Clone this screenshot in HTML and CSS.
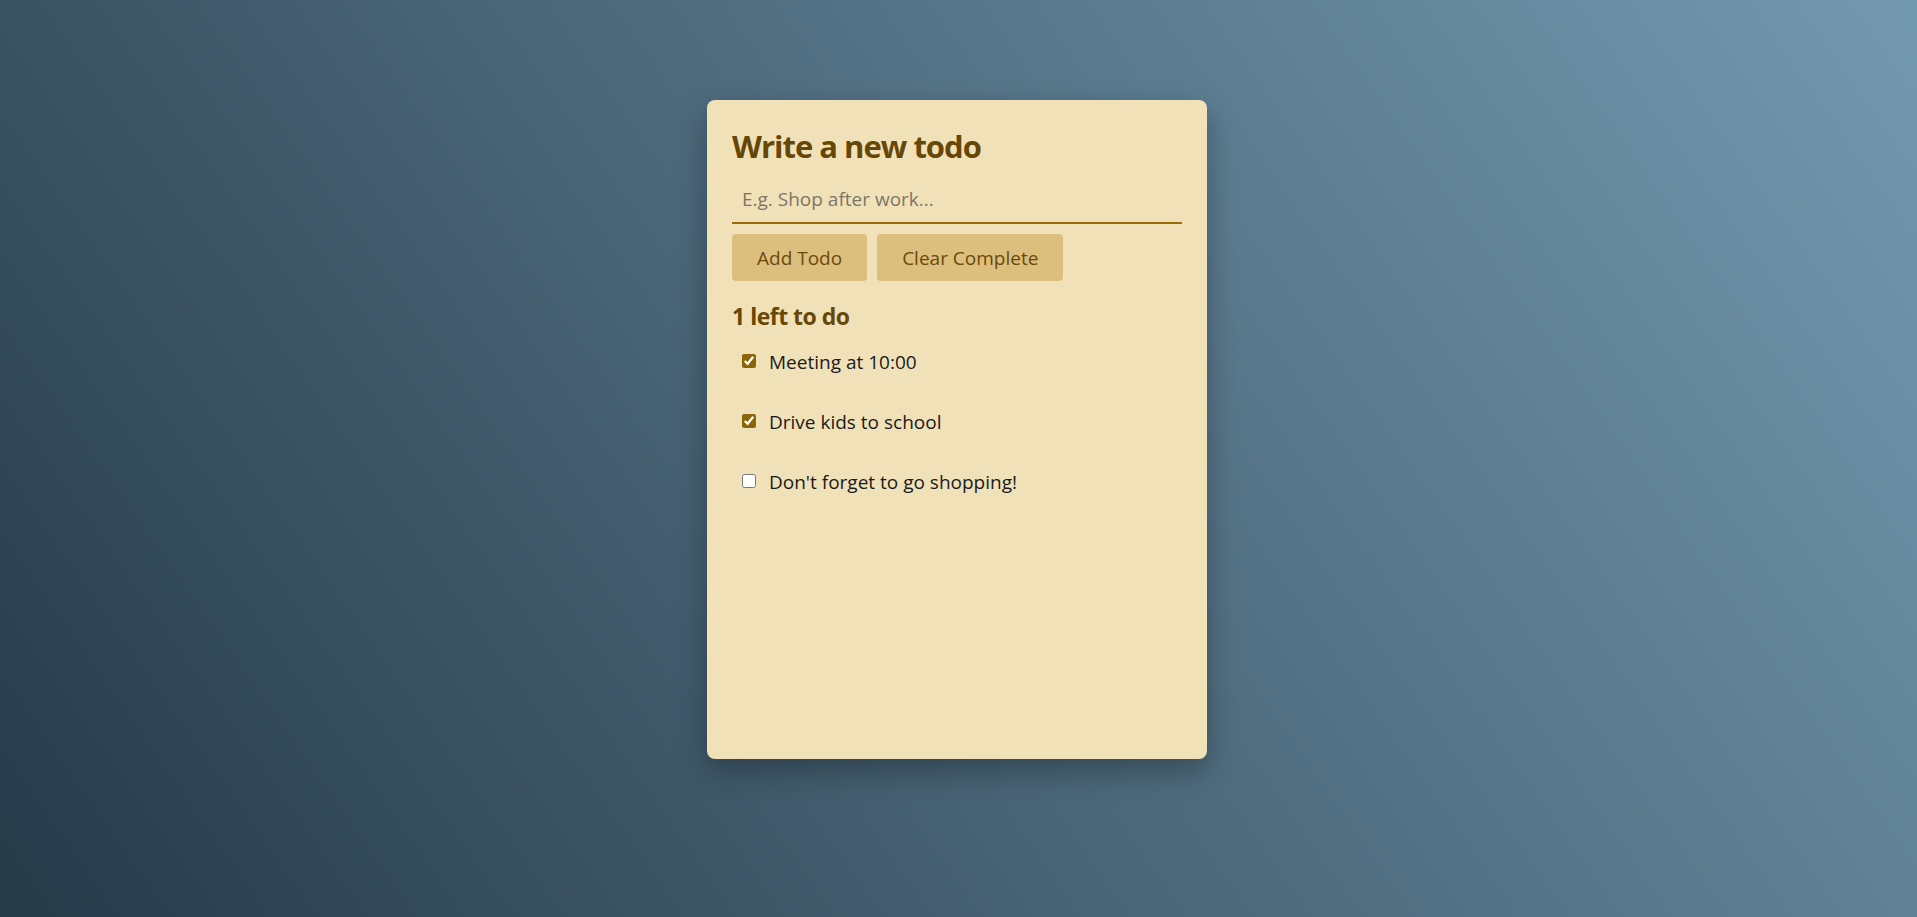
FILE: index.html
```html
<!DOCTYPE html>
<html lang="en">
<head>
<meta charset="utf-8">
<title>Todo</title>
<link rel="stylesheet" href="styles.css">
</head>
<body>
<main class="page">
  <section class="card">
    <h1 class="title">Write a new todo</h1>
    <input class="todo-input" type="text" placeholder="E.g. Shop after work...">
    <div class="actions">
      <button class="btn">Add Todo</button>
      <button class="btn">Clear Complete</button>
    </div>
    <h2 class="count">1 left to do</h2>
    <ul class="list">
      <li class="item"><input class="check" type="checkbox" checked><span class="label">Meeting at 10:00</span></li>
      <li class="item"><input class="check" type="checkbox" checked><span class="label">Drive kids to school</span></li>
      <li class="item"><input class="check" type="checkbox"><span class="label">Don't forget to go shopping!</span></li>
    </ul>
  </section>
</main>
</body>
</html>
```

FILE: styles.css
```css
html, body {
  margin: 0;
  height: 100%;
}
body {
  font-family: "Segoe UI", "Open Sans", "Noto Sans", sans-serif;
  background: linear-gradient(55deg, #263a48 0%, #4a6678 45%, #7399b0 100%);
  overflow: hidden;
}
.page {
  display: flex;
  justify-content: center;
  padding-top: 100px;
  padding-right: 3px;
  height: 100%;
  box-sizing: border-box;
}
.card {
  width: 500px;
  height: 659px;
  box-sizing: border-box;
  padding: 25px;
  background: #f1e1b9;
  border-radius: 8px;
  box-shadow: 0 12px 30px rgba(0, 0, 0, 0.3);
  display: flex;
  flex-direction: column;
}
.title {
  margin: 0;
  padding-top: 1px;
  font-size: 31px;
  line-height: 40px;
  letter-spacing: -1px;
  font-weight: 700;
  color: #664705;
}
.todo-input {
  margin-top: 9px;
  height: 49px;
  box-sizing: border-box;
  padding: 0 10px;
  border: none;
  border-bottom: 2px solid #9a6b06;
  background: transparent;
  font-family: inherit;
  font-size: 19px;
  color: #333;
  outline: none;
}
.todo-input::placeholder {
  color: #7d7666;
}
.actions {
  display: flex;
  gap: 10px;
  margin-top: 10px;
}
.btn {
  height: 47px;
  padding: 0 25px;
  border: none;
  border-radius: 4px;
  background: #dcbe7d;
  color: #6a4a0c;
  font-family: inherit;
  font-size: 19px;
}
.count {
  margin: 19px 0 0;
  font-size: 23px;
  line-height: 32px;
  letter-spacing: -0.5px;
  font-weight: 700;
  color: #664705;
}
.list {
  list-style: none;
  margin: 0;
  padding: 0;
}
.item {
  height: 60px;
  display: flex;
  align-items: center;
  padding-left: 10px;
  gap: 13px;
}
.check {
  margin: 0 0 2px;
  width: 14px;
  height: 14px;
  accent-color: #8b6508;
}
.label {
  font-size: 19px;
  color: #1a1a1a;
}
```
